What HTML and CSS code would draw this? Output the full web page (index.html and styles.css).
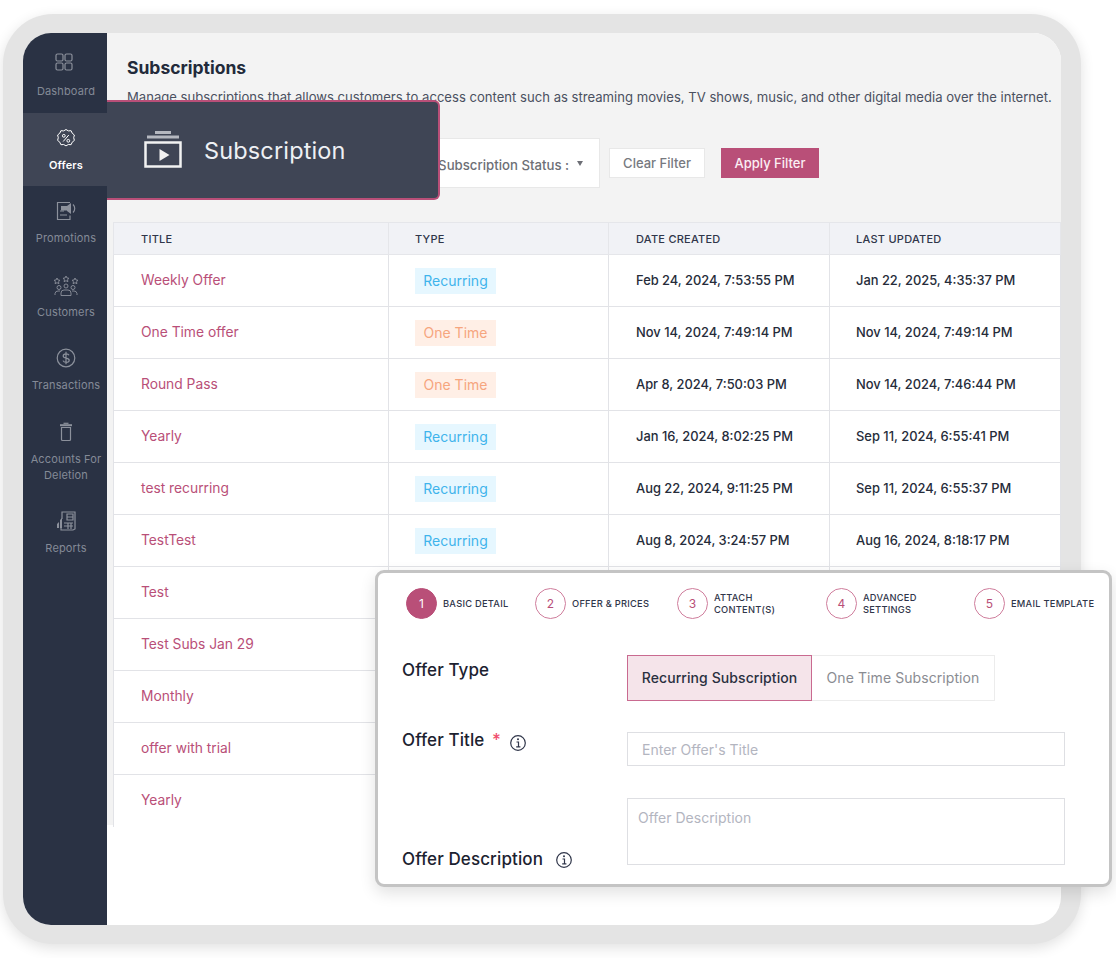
FILE: index.html
```html
<!DOCTYPE html>
<html lang="en">
<head>
  <meta charset="UTF-8">
  <meta name="viewport" content="width=device-width, initial-scale=1">
  <title>Subscriptions</title>
  <link rel="stylesheet" href="styles.css">
</head>
<body>

  <div class="frame">
    <div class="screen">

      <!-- Sidebar -->
      <nav class="sidebar">
        <a class="nav-item nav-first">
          <svg class="nav-icon" viewBox="0 0 24 24"><rect x="4" y="4" width="7" height="7" rx="1.5"/><rect x="13" y="4" width="7" height="7" rx="1.5"/><rect x="4" y="13" width="7" height="7" rx="1.5"/><rect x="13" y="13" width="7" height="7" rx="1.5"/></svg>
          <span>Dashboard</span>
        </a>
        <a class="nav-item active">
          <svg class="nav-icon" viewBox="0 0 24 24"><path d="M12 3.500l2.300 1.400 2.800-.2 1.100 2.500 2.200 1.800-.7 2.700.7 2.700-2.200 1.800-1.100 2.500-2.800-.2-2.300 1.400-2.300-1.400-2.800.2-1.100-2.500-2.200-1.800.7-2.700-.7-2.700 2.200-1.800 1.100-2.500 2.800.2z"/><circle cx="9.800" cy="9.800" r="1.400"/><circle cx="14.300" cy="14.800" r="1.400"/><path d="M14.800 9l-5.600 6.500"/></svg>
          <span>Offers</span>
        </a>
        <a class="nav-item">
          <svg class="nav-icon" viewBox="0 0 24 24"><path d="M16 16.500v4H3.500v-17H16"/><path d="M6 12h4M6 16h7"/><path class="fill" d="M7 7h6v4.500H7zM13 7l4-3v11l-4-3z"/><path d="M19 5.500a5.500 5.500 0 0 1 0 8"/></svg>
          <span>Promotions</span>
        </a>
        <a class="nav-item">
          <svg class="nav-icon wide" viewBox="0 0 28 24"><path d="M5 5l1 2 2 .3-1.500 1.400.4 2L5 9.700l-1.900 1 .4-2L2 7.300 4 7zM14 3l1 2 2 .3-1.500 1.400.4 2-1.900-1-1.900 1 .4-2L11 5.300 13 5zM23 5l1 2 2 .3-1.500 1.400.4 2-1.900-1-1.900 1 .4-2L20 7.300 22 7z"/><circle cx="7" cy="14.500" r="2"/><circle cx="14" cy="13" r="2"/><circle cx="21" cy="14.500" r="2"/><path d="M3 22v-1.500a3 3 0 0 1 3-2.500h2M25 22v-1.500a3 3 0 0 0-3-2.500h-2M9 22.500v-2.500a3 3 0 0 1 3-3h4a3 3 0 0 1 3 3v2.500z"/></svg>
          <span>Customers</span>
        </a>
        <a class="nav-item">
          <svg class="nav-icon" viewBox="0 0 24 24"><circle cx="12" cy="12" r="8.800"/><path d="M15 9.300c-.4-1-1.600-1.500-3-1.500-1.500 0-2.800.8-2.800 2.100 0 3 6 1.400 6 4.300 0 1.400-1.400 2.100-3 2.100-1.500 0-2.800-.6-3.200-1.700M12 5.800v12.400"/></svg>
          <span>Transactions</span>
        </a>
        <a class="nav-item">
          <svg class="nav-icon" viewBox="0 0 24 24"><path d="M7.500 7.500h9v12a1 1 0 0 1-1 1h-7a1 1 0 0 1-1-1z"/><path class="thick" d="M6 5.200h12"/><path d="M9.500 3.300h5"/></svg>
          <span>Accounts For Deletion</span>
        </a>
        <a class="nav-item">
          <svg class="nav-icon" viewBox="0 0 24 24"><path d="M8 10V3h13v17l-2 1H7v-2"/><path d="M13 5h6v6h-6zM13 8h6M10 14h9M10 17h9M14 14v6M17 14v6"/><path class="fill" d="M3 19v-4l2-2v6zM6 19v-8l2-2v10z"/></svg>
          <span>Reports</span>
        </a>
      </nav>

      <main class="main">
        <div class="content">
          <h1>Subscriptions</h1>
          <p class="intro">Manage subscriptions that allows customers to access content such as streaming movies, TV shows, music, and other digital media over the internet.</p>

          <div class="filters">
            <div class="filter-box">
              <span>Subscription Status :</span>
              <i class="caret"></i>
            </div>
            <button class="btn btn-clear">Clear Filter</button>
            <button class="btn btn-apply">Apply Filter</button>
          </div>

          <table class="offers">
            <thead>
              <tr><th>TITLE</th><th>TYPE</th><th>DATE CREATED</th><th>LAST UPDATED</th></tr>
            </thead>
            <tbody>
              <tr><td><a>Weekly Offer</a></td><td><span class="tag recurring">Recurring</span></td><td>Feb 24, 2024, 7:53:55 PM</td><td>Jan 22, 2025, 4:35:37 PM</td></tr>
              <tr><td><a>One Time offer</a></td><td><span class="tag onetime">One Time</span></td><td>Nov 14, 2024, 7:49:14 PM</td><td>Nov 14, 2024, 7:49:14 PM</td></tr>
              <tr><td><a>Round Pass</a></td><td><span class="tag onetime">One Time</span></td><td>Apr 8, 2024, 7:50:03 PM</td><td>Nov 14, 2024, 7:46:44 PM</td></tr>
              <tr><td><a>Yearly</a></td><td><span class="tag recurring">Recurring</span></td><td>Jan 16, 2024, 8:02:25 PM</td><td>Sep 11, 2024, 6:55:41 PM</td></tr>
              <tr><td><a>test recurring</a></td><td><span class="tag recurring">Recurring</span></td><td>Aug 22, 2024, 9:11:25 PM</td><td>Sep 11, 2024, 6:55:37 PM</td></tr>
              <tr><td><a>TestTest</a></td><td><span class="tag recurring">Recurring</span></td><td>Aug 8, 2024, 3:24:57 PM</td><td>Aug 16, 2024, 8:18:17 PM</td></tr>
              <tr><td><a>Test</a></td><td></td><td></td><td></td></tr>
              <tr><td><a>Test Subs Jan 29</a></td><td></td><td></td><td></td></tr>
              <tr><td><a>Monthly</a></td><td></td><td></td><td></td></tr>
              <tr><td><a>offer with trial</a></td><td></td><td></td><td></td></tr>
              <tr class="last"><td><a>Yearly</a></td><td></td><td></td><td></td></tr>
            </tbody>
          </table>
        </div>
      </main>
    </div>

    <!-- Subscription callout -->
    <div class="callout">
      <svg class="callout-icon" viewBox="0 0 38 38" width="38" height="38"><path class="soft" d="M11 1.500h16"/><path class="soft" d="M3 6h32"/><path d="M1.500 11.500h35v24h-35z"/><path class="play" d="M15.500 18l10 6-10 6z"/></svg>
      <span>Subscription</span>
    </div>

    <!-- Offer wizard panel -->
    <section class="wizard">
      <ol class="steps">
        <li class="step current"><b>1</b><span>BASIC DETAIL</span></li>
        <li class="step"><b>2</b><span>OFFER &amp; PRICES</span></li>
        <li class="step"><b>3</b><span>ATTACH<br>CONTENT(S)</span></li>
        <li class="step"><b>4</b><span>ADVANCED<br>SETTINGS</span></li>
        <li class="step"><b>5</b><span>EMAIL TEMPLATE</span></li>
      </ol>

      <div class="form-row row-type">
        <label>Offer Type</label>
        <div class="toggle">
          <span class="toggle-on">Recurring Subscription</span>
          <span class="toggle-off">One Time Subscription</span>
        </div>
      </div>

      <div class="form-row row-title">
        <label>Offer Title <em>*</em>
          <svg class="info" viewBox="0 0 18 18" width="18" height="18"><circle cx="9" cy="9" r="7.300"/><path d="M7.500 8h2v4.800M7.200 12.800h4.200"/><circle class="dot" cx="9" cy="5.300" r="1"/></svg>
        </label>
        <input type="text" placeholder="Enter Offer's Title">
      </div>

      <div class="form-row row-desc">
        <label>Offer Description
          <svg class="info" viewBox="0 0 18 18" width="18" height="18"><circle cx="9" cy="9" r="7.300"/><path d="M7.500 8h2v4.800M7.200 12.800h4.200"/><circle class="dot" cx="9" cy="5.300" r="1"/></svg>
        </label>
        <textarea placeholder="Offer Description"></textarea>
      </div>
    </section>
  </div>

</body>
</html>
```

FILE: styles.css
```css
* {
  box-sizing: border-box;
}
body {
  margin: 0;
  padding: 14px 0 0 3px;
  font-family: Inter, "Liberation Sans", sans-serif;
  background: #fff;
  color: #2a3244;
  overflow: hidden;
  height: 958px;
}

/* Device frame */
.frame {
  position: relative;
  width: 1078px;
  height: 930px;
  padding: 19px 20px;
  background: #e4e4e4;
  border-radius: 50px;
  box-shadow: 0 4px 14px rgba(0, 0, 0, 0.12);
}
.screen {
  display: flex;
  height: 100%;
  background: #fff;
  border-radius: 28px;
  overflow: hidden;
}

/* Sidebar */
.sidebar {
  flex: 0 0 84px;
  background: #2a3244;
  color: #848a97;
}
.nav-item {
  display: flex;
  flex-direction: column;
  align-items: center;
  padding: 13px 1px 13.400px 3px;
  font-size: 11px;
  line-height: 16px;
  letter-spacing: 0.15px;
  text-align: center;
}
.nav-item span {
  margin-top: 7px;
}
.nav-first {
  padding-top: 17px;
  padding-bottom: 14px;
}
.nav-first span {
  margin-top: 9px;
}
.nav-first .nav-icon {
  margin-right: 5px;
}
.nav-item.active {
  background: #3f4555;
  color: #fff;
  font-weight: 600;
}
.nav-icon {
  width: 24px;
  height: 24px;
  fill: none;
  stroke: #8c919c;
  stroke-width: 1.200;
}
.nav-icon.wide {
  width: 28px;
  stroke-width: 0.900;
}
.nav-icon .fill {
  fill: #8c919c;
  stroke: none;
}
.nav-icon .thick {
  stroke-width: 2;
}
.active .nav-icon {
  stroke: #fff;
  stroke-width: 1;
}

/* Main area */
.main {
  flex: 1;
  min-width: 0;
}
.content {
  height: 792px;
  padding: 24px 0 0 6px;
  background: #f3f3f3;
}
h1 {
  margin: 0 0 0 14px;
  font-size: 17.500px;
  line-height: 22px;
  font-weight: 700;
  color: #222a3a;
}
.intro {
  margin: 9px 0 0 14px;
  font-size: 13.100px;
  line-height: 18px;
  color: #4a5060;
  white-space: nowrap;
}

/* Filters */
.filters {
  display: flex;
  align-items: center;
  margin: 32px 0 0 14px;
}
.filter-box {
  display: flex;
  align-items: center;
  justify-content: flex-end;
  width: 473px;
  height: 50px;
  padding-right: 16px;
  background: #fff;
  border: 1px solid #e8e8e8;
  font-size: 13.200px;
  font-weight: 500;
  color: #6d6f76;
}
.filter-box span {
  padding-top: 3px;
}
.caret {
  margin-left: 8px;
  border-left: 3.500px solid transparent;
  border-right: 3.500px solid transparent;
  border-top: 5px solid #6d6f76;
}
.btn {
  height: 30px;
  border: 1px solid #e8e8e8;
  font: 500 13px Inter, "Liberation Sans", sans-serif;
  cursor: pointer;
}
.btn-clear {
  width: 96px;
  margin: 0 16px 0 9px;
  background: #fff;
  color: #77797f;
}
.btn-apply {
  width: 98px;
  background: #b94f78;
  border-color: #b94f78;
  color: #fbeef3;
}

/* Table */
.offers {
  width: 948px;
  margin-top: 34px;
  table-layout: fixed;
  border-collapse: collapse;
  background: #fff;
}
.offers th {
  height: 32px;
  padding: 0 0 0 26px;
  text-align: left;
  font-size: 11px;
  font-weight: 500;
  letter-spacing: 0.25px;
  color: #30364a;
  background: #f1f2f6;
  border: 1px solid #e5e6ea;
}
.offers th:nth-child(1) { width: 275px; }
.offers th:nth-child(2) { width: 220px; }
.offers th:nth-child(3) { width: 221px; }
.offers td {
  height: 52px;
  padding: 0 0 0 26px;
  font-size: 12.900px;
  font-weight: 500;
  color: #262c3a;
  border: 1px solid #e2e3e7;
}
.offers th:first-child,
.offers td:first-child {
  padding-left: 27px;
}
.offers td:first-child {
  padding-bottom: 2px;
}
.offers th:nth-child(3),
.offers td:nth-child(3) {
  padding-left: 27px;
}
.offers .last td {
  border-bottom: 0;
}
.offers a {
  color: #b94f78;
  font-size: 13.800px;
  font-weight: 400;
}
.tag {
  display: inline-block;
  width: 81px;
  height: 26px;
  line-height: 25px;
  text-align: center;
  font-size: 14px;
  font-weight: 400;
}
.recurring {
  background: #e6f7ff;
  color: #3fb4ec;
}
.onetime {
  background: #ffefe6;
  color: #f6a57e;
}

/* Callout over the page */
.callout {
  position: absolute;
  left: 104px;
  top: 86px;
  display: flex;
  align-items: center;
  gap: 22px;
  width: 333px;
  height: 100px;
  padding-left: 37px;
  background: #3f4555;
  border: 2px solid #b94f78;
  border-left: 0;
  border-radius: 0 6px 6px 0;
  color: #eef0f4;
  font-size: 23.500px;
  letter-spacing: 0.15px;
}
.callout-icon {
  fill: none;
  stroke: #f2f2f2;
  stroke-width: 2.500;
}
.callout-icon .soft {
  stroke-width: 3;
  stroke: #b5b8c0;
}
.callout-icon .play {
  fill: #f2f2f2;
  stroke: none;
}

/* Wizard panel */
.wizard {
  position: absolute;
  left: 372px;
  top: 556px;
  width: 737px;
  height: 317px;
  padding: 15px 0 0 24px;
  background: #fff;
  border: 3px solid #c4c4c4;
  border-radius: 9px;
  box-shadow: 0 6px 16px rgba(0, 0, 0, 0.12);
}
.steps {
  display: grid;
  grid-template-columns: 129px 142px 149px 148px auto;
  margin: 0;
  padding: 0 0 0 4px;
  list-style: none;
}
.step {
  display: flex;
  align-items: center;
  gap: 6px;
  font-size: 9.300px;
  line-height: 12px;
  font-weight: 500;
  letter-spacing: 0.25px;
  white-space: nowrap;
  color: #30364a;
}
.step b {
  flex: 0 0 31px;
  height: 31px;
  line-height: 29px;
  text-align: center;
  border: 1px solid #cf7d9c;
  border-radius: 50%;
  color: #b94f78;
  font-size: 12px;
  font-weight: 400;
  letter-spacing: 0;
}
.step.current b {
  background: #b94f78;
  border-color: #b94f78;
  color: #fff;
}
.form-row {
  display: grid;
  grid-template-columns: 225px 438px;
}
.form-row label {
  font-size: 17px;
  font-weight: 500;
  letter-spacing: 0.1px;
  color: #1c2230;
}
.form-row em {
  margin-left: 3px;
  font-style: normal;
  color: #f0506e;
}
.info {
  vertical-align: -4px;
  fill: none;
  stroke: #30364a;
  stroke-width: 1.200;
}
.row-title .info {
  margin-left: 3px;
  vertical-align: -6px;
}
.row-desc .info {
  margin-left: 7px;
}
.info .dot {
  fill: #30364a;
  stroke: none;
}
.row-type {
  margin-top: 36px;
}
.row-type label {
  padding-top: 5px;
}
.toggle {
  display: flex;
  height: 46px;
  font-size: 14px;
  line-height: 44px;
  letter-spacing: 0.08px;
  text-align: center;
}
.toggle-on {
  width: 185px;
  background: #f5e4ea;
  border: 1px solid #c96a90;
  font-weight: 500;
  color: #2a3040;
}
.toggle-off {
  width: 183px;
  border: 1px solid #ececec;
  border-left: 0;
  color: #8a8c92;
}
.row-title {
  margin-top: 31px;
}
.row-title label {
  line-height: 20px;
  margin-top: -2px;
}
input,
textarea {
  display: block;
  border: 1px solid #dedfe3;
  background: #fff;
  font: 400 14px Inter, "Liberation Sans", sans-serif;
  color: #2a3040;
  outline: none;
}
input {
  height: 34px;
  padding: 0 14px;
}
textarea {
  height: 67px;
  padding: 10px;
  resize: none;
}
input::placeholder,
textarea::placeholder {
  color: #b3b5bf;
}
.row-desc {
  margin-top: 32px;
  align-items: end;
}
.row-desc label {
  line-height: 20px;
  margin-bottom: -4px;
}
```
